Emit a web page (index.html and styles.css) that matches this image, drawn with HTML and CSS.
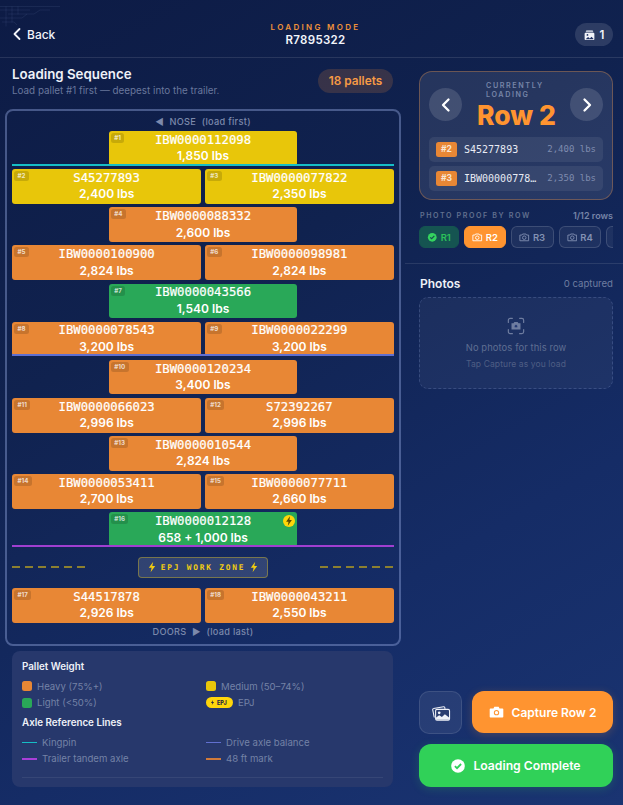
FILE: index.html
```html
<!DOCTYPE html>
<html lang="en">
<head>
<meta charset="utf-8">
<title>Loading Mode</title>
<link rel="stylesheet" href="styles.css">
</head>
<body>
<div class="app">
  <svg class="corner-art" viewBox="0 0 60 30" aria-hidden="true"><path d="M0 6.500h60M0 10h30M8 14h26l6-4h10M0 18h22l5-4M2 22h12l3 3M6 6.500v20M12 6.500v16M18 6.500v8"/></svg>
  <header class="topbar">
    <div class="back">
      <svg class="back-ico" viewBox="0 0 10 14"><path d="M7.500 2 2.500 7l5 5"/></svg>
      <span>Back</span>
    </div>
    <div class="mode">
      <div class="mode-label">LOADING MODE</div>
      <div class="mode-id">R7895322</div>
    </div>
    <div class="count-pill">
      <svg class="count-ico" viewBox="0 0 14 14"><path d="M3 .8h8l1 2.600H2z" fill="#e8ecf6" opacity=".75"/><rect x=".8" y="4" width="12.400" height="9.500" rx="1.500" fill="#f2f4fa"/><circle cx="4.400" cy="6.900" r="1.100" fill="#1c2f63"/><path d="M2 12.500l3.200-3 2.200 1.800 2.200-2 2.400 2.400v.8z" fill="#1c2f63"/></svg>
      <span>1</span>
    </div>
  </header>

  <div class="columns">
    <main class="left">
      <div class="seq-head">
        <div>
          <h1 class="seq-title">Loading Sequence</h1>
          <p class="seq-sub">Load pallet #1 first — deepest into the trailer.</p>
        </div>
        <div class="seq-pill">18 pallets</div>
      </div>

      <section class="trailer">
        <div class="end-label end-top">◀&nbsp; NOSE&nbsp; (load first)</div>
        <div class="rows">
          <div class="row single"><div class="pallet yellow"><span class="tag">#1</span><span class="pid">IBW0000112098</span><span class="wt">1,850 lbs</span></div><i class="axle cyan"></i></div>
          <div class="row"><div class="pallet yellow"><span class="tag">#2</span><span class="pid">S45277893</span><span class="wt">2,400 lbs</span></div><div class="pallet yellow"><span class="tag">#3</span><span class="pid">IBW0000077822</span><span class="wt">2,350 lbs</span></div></div>
          <div class="row single"><div class="pallet orange"><span class="tag">#4</span><span class="pid">IBW0000088332</span><span class="wt">2,600 lbs</span></div></div>
          <div class="row"><div class="pallet orange"><span class="tag">#5</span><span class="pid">IBW0000100900</span><span class="wt">2,824 lbs</span></div><div class="pallet orange"><span class="tag">#6</span><span class="pid">IBW0000098981</span><span class="wt">2,824 lbs</span></div></div>
          <div class="row single"><div class="pallet green"><span class="tag">#7</span><span class="pid">IBW0000043566</span><span class="wt">1,540 lbs</span></div></div>
          <div class="row"><div class="pallet orange"><span class="tag">#8</span><span class="pid">IBW0000078543</span><span class="wt">3,200 lbs</span></div><div class="pallet orange"><span class="tag">#9</span><span class="pid">IBW0000022299</span><span class="wt">3,200 lbs</span></div><i class="axle blue"></i></div>
          <div class="row single"><div class="pallet orange"><span class="tag">#10</span><span class="pid">IBW0000120234</span><span class="wt">3,400 lbs</span></div></div>
          <div class="row"><div class="pallet orange"><span class="tag">#11</span><span class="pid">IBW0000066023</span><span class="wt">2,996 lbs</span></div><div class="pallet orange"><span class="tag">#12</span><span class="pid">S72392267</span><span class="wt">2,996 lbs</span></div></div>
          <div class="row single"><div class="pallet orange"><span class="tag">#13</span><span class="pid">IBW0000010544</span><span class="wt">2,824 lbs</span></div></div>
          <div class="row"><div class="pallet orange"><span class="tag">#14</span><span class="pid">IBW0000053411</span><span class="wt">2,700 lbs</span></div><div class="pallet orange"><span class="tag">#15</span><span class="pid">IBW0000077711</span><span class="wt">2,660 lbs</span></div></div>
          <div class="row single"><div class="pallet green"><span class="tag">#16</span><span class="pid">IBW0000012128</span><span class="wt">658 + 1,000 lbs</span><span class="bolt-badge"><svg viewBox="0 0 10 10"><path d="M5.800 1 2.600 5.600h2L4 9l3.400-4.800h-2z"/></svg></span></div><i class="axle purple"></i></div>
        </div>
        <div class="zone">
          <span class="dash"></span>
          <div class="zone-label">
            <svg class="zone-bolt" viewBox="0 0 10 12"><path d="M6.200.8 1.800 6.800h2.800L3.600 11.200 8.200 5H5.300z"/></svg>
            <span>EPJ WORK ZONE</span>
            <svg class="zone-bolt" viewBox="0 0 10 12"><path d="M6.200.8 1.800 6.800h2.800L3.600 11.200 8.200 5H5.300z"/></svg>
          </div>
          <span class="dash"></span>
        </div>
        <div class="row"><div class="pallet orange"><span class="tag">#17</span><span class="pid">S44517878</span><span class="wt">2,926 lbs</span></div><div class="pallet orange"><span class="tag">#18</span><span class="pid">IBW0000043211</span><span class="wt">2,550 lbs</span></div></div>
        <div class="end-label end-bottom">DOORS&nbsp; ▶&nbsp; (load last)</div>
      </section>

      <section class="legend">
        <h2 class="legend-title">Pallet Weight</h2>
        <div class="legend-grid">
          <div class="lg-item"><i class="swatch s-orange"></i>Heavy (75%+)</div>
          <div class="lg-item"><i class="swatch s-yellow"></i>Medium (50–74%)</div>
          <div class="lg-item"><i class="swatch s-green"></i>Light (&lt;50%)</div>
          <div class="lg-item"><span class="epj-chip"><svg viewBox="0 0 10 12"><path d="M6.200.8 1.800 6.800h2.800L3.600 11.200 8.200 5H5.300z"/></svg>EPJ</span>EPJ</div>
        </div>
        <h2 class="legend-title axle-title">Axle Reference Lines</h2>
        <div class="legend-grid">
          <div class="lg-item"><i class="ln l-cyan"></i>Kingpin</div>
          <div class="lg-item"><i class="ln l-blue"></i>Drive axle balance</div>
          <div class="lg-item"><i class="ln l-purple"></i>Trailer tandem axle</div>
          <div class="lg-item"><i class="ln l-orange"></i>48 ft mark</div>
        </div>
        <div class="legend-rule"></div>
      </section>
    </main>

    <aside class="right">
      <div class="right-top">
        <section class="current">
          <div class="current-head">
            <div class="nav-btn"><svg viewBox="0 0 14 16"><path d="M9.500 2.500 4 8l5.500 5.500"/></svg></div>
            <div class="current-mid">
              <div class="current-label">CURRENTLY LOADING</div>
              <div class="current-row">Row 2</div>
            </div>
            <div class="nav-btn"><svg viewBox="0 0 14 16"><path d="M4.500 2.500 10 8l-5.500 5.500"/></svg></div>
          </div>
          <div class="cur-item"><span class="cur-tag">#2</span><span class="cur-id">S45277893</span><span class="cur-wt">2,400 lbs</span></div>
          <div class="cur-item"><span class="cur-tag">#3</span><span class="cur-id">IBW00000778…</span><span class="cur-wt">2,350 lbs</span></div>
        </section>

        <div class="proof-head">
          <span class="proof-label">PHOTO PROOF BY ROW</span>
          <span class="proof-count">1/12 rows</span>
        </div>
        <div class="chips">
          <div class="chip chip-done"><svg class="chip-ico" viewBox="0 0 12 12"><circle cx="6" cy="6" r="5" fill="#34d45f"/><path d="M3.600 6.100 5.300 7.700 8.400 4.500" fill="none" stroke="#15504f" stroke-width="1.400"/></svg>R1</div>
          <div class="chip chip-active"><svg class="chip-ico cam" viewBox="0 0 12 12"><path d="M1 3.500h2.300l.8-1.200h3.800l.8 1.200H11v6.500H1z"/><circle cx="6" cy="6.500" r="2"/></svg>R2</div>
          <div class="chip"><svg class="chip-ico cam" viewBox="0 0 12 12"><path d="M1 3.500h2.300l.8-1.200h3.800l.8 1.200H11v6.500H1z"/><circle cx="6" cy="6.500" r="2"/></svg>R3</div>
          <div class="chip"><svg class="chip-ico cam" viewBox="0 0 12 12"><path d="M1 3.500h2.300l.8-1.200h3.800l.8 1.200H11v6.500H1z"/><circle cx="6" cy="6.500" r="2"/></svg>R4</div>
          <div class="chip"><svg class="chip-ico cam" viewBox="0 0 12 12"><path d="M1 3.500h2.300l.8-1.200h3.800l.8 1.200H11v6.500H1z"/><circle cx="6" cy="6.500" r="2"/></svg>R5</div>
        </div>
      </div>

      <section class="photos">
        <div class="photos-head"><span class="photos-title">Photos</span><span class="photos-count">0 captured</span></div>
        <div class="dropzone">
          <svg class="drop-ico" viewBox="0 0 20 20"><path class="corner" d="M1.500 6V3.500a2 2 0 0 1 2-2H6M14 1.500h2.500a2 2 0 0 1 2 2V6M18.500 14v2.500a2 2 0 0 1-2 2H14M6 18.500H3.500a2 2 0 0 1-2-2V14"/><path class="body" d="M5 7h2.200l1-1.500h3.600l1 1.500H15v7H5z"/><circle class="lens" cx="10" cy="10.200" r="1.900"/></svg>
          <div class="drop-main">No photos for this row</div>
          <div class="drop-sub">Tap Capture as you load</div>
        </div>
      </section>

      <div class="actions">
        <div class="action-row">
          <div class="gallery-btn"><svg viewBox="0 0 22 20"><path class="g-back" d="M3.500 15 1.800 6.500a1.200 1.200 0 0 1 1-1.400l11-2.100a1.200 1.200 0 0 1 1.400 1l.3 1.500"/><rect class="g-front" x="5" y="6" width="15.500" height="12" rx="1.500"/><circle class="g-dot" cx="9" cy="9.800" r="1.500"/><path class="g-hill" d="M5.500 17.500v-2.500l3.500-2.500 3 2 3.300-3.200 4.700 3.700v2.500z"/></svg></div>
          <div class="capture-btn"><svg viewBox="0 0 18 15"><path d="M1.500 3h3.700l1.100-2h5.400l1.100 2h3.700a1 1 0 0 1 1 1v9.500a1 1 0 0 1-1 1h-15a1 1 0 0 1-1-1V4a1 1 0 0 1 1-1z"/><circle cx="9" cy="8.300" r="3.300" fill="#ff9430"/><circle cx="9" cy="8.300" r="2" fill="#fff"/></svg><span>Capture Row 2</span></div>
        </div>
        <div class="complete-btn"><svg viewBox="0 0 14 14"><circle cx="7" cy="7" r="6.800" fill="#fff"/><path d="M3.900 7.200 6 9.200 10.100 5" fill="none" stroke="#30d158" stroke-width="1.800"/></svg><span>Loading Complete</span></div>
      </div>
    </aside>
  </div>
</div>
</body>
</html>
```

FILE: styles.css
```css
* { box-sizing: border-box; }
html, body { margin: 0; padding: 0; }
body {
  width: 623px;
  height: 805px;
  overflow: hidden;
  font-family: Inter, "Liberation Sans", sans-serif;
  background: linear-gradient(150deg, #0d1b45 0%, #10224f 35%, #152c66 70%, #1a3472 100%);
  color: #f2f4fa;
}
h1, h2, p { margin: 0; }
.app { position: relative; display: flex; flex-direction: column; height: 805px; }
.corner-art { position: absolute; left: 0; top: 0; width: 60px; height: 30px; fill: none; stroke: rgba(150,170,220,.1); stroke-width: 1; }

/* top bar */
.topbar {
  height: 58px;
  flex: none;
  padding: 22px 10px 0 12px;
  display: grid;
  grid-template-columns: 1fr auto 1fr;
  align-items: start;
  border-bottom: 1px solid rgba(255,255,255,.11);
}
.back { display: flex; align-items: center; gap: 5px; font-size: 12px; font-weight: 500; height: 24px; }
.back-ico { width: 10px; height: 14px; fill: none; stroke: #f2f4fa; stroke-width: 1.800; stroke-linecap: round; stroke-linejoin: round; }
.mode { text-align: center; padding-left: 6px; }
.mode-label { font-size: 8px; font-weight: 600; letter-spacing: 2.300px; color: #f0923a; line-height: 10px; }
.mode-id { font-size: 11.500px; font-weight: 600; line-height: 17px; letter-spacing: .300px; }
.count-pill {
  justify-self: end;
  width: 38px; height: 23px;
  border-radius: 12px;
  background: rgba(255,255,255,.12);
  display: flex; align-items: center; justify-content: center; gap: 5px;
  font-size: 11.500px; font-weight: 600;
  margin-top: 1px;
}
.count-ico { width: 11px; height: 12px; }

.columns { flex: 1; display: flex; min-height: 0; }

/* left */
.left { width: 405px; flex: none; display: flex; flex-direction: column; padding: 8px 5px 0; }
.seq-head { display: flex; justify-content: space-between; align-items: flex-start; padding: 0 7px; height: 43px; }
.seq-title { font-size: 13.300px; font-weight: 600; line-height: 16px; color: #eef1f8; }
.seq-sub { font-size: 9.850px; color: #69779c; line-height: 13px; margin-top: 2px; }
.seq-pill {
  width: 75px; height: 24px; margin-top: 3px;
  border-radius: 12px;
  background: rgba(255,150,60,.17);
  color: #f79a45;
  font-size: 11.800px; font-weight: 600;
  display: flex; align-items: center; justify-content: center;
}
.trailer {
  width: 396px;
  height: 537px;
  border: 2px solid rgba(140,160,215,.45);
  border-radius: 8px;
  padding: 0 5px;
  display: flex; flex-direction: column;
}
.end-label { text-align: center; font-size: 9.200px; font-weight: 500; color: #7c89ab; letter-spacing: .300px; }
.end-top { height: 20px; line-height: 21px; }
.end-bottom { height: 20px; line-height: 18px; }
.rows { display: flex; flex-direction: column; gap: 3.500px; }
.row { position: relative; display: grid; grid-template-columns: 1fr 1fr; gap: 3.500px; height: 34.630px; flex: none; }
.row.single { grid-template-columns: 188.500px; justify-content: center; }
.pallet {
  position: relative;
  border-radius: 3px;
  display: flex; flex-direction: column; align-items: center; justify-content: center;
  color: #fff;
}
.yellow { background: #e8c60a; }
.orange { background: #e88735; }
.green { background: #29a858; }
.pid { font-family: "DejaVu Sans Mono", "Liberation Mono", monospace; font-size: 12.300px; line-height: 15.500px; -webkit-text-stroke: .2px #fff; }
.wt { font-size: 12px; font-weight: 600; line-height: 15.500px; }
.tag {
  position: absolute; left: 2px; top: 2px;
  font-size: 6.200px; font-weight: 700; line-height: 10px;
  padding: 0 3.500px; border-radius: 2.500px;
  background: rgba(0,0,0,.14);
  color: rgba(255,255,255,.75);
}
.bolt-badge { position: absolute; right: 2px; top: 3px; width: 12px; height: 12px; border-radius: 50%; background: #ffd60a; display: flex; }
.bolt-badge svg { width: 12px; height: 12px; fill: #5a4a00; }
.axle { position: absolute; left: 0; right: 0; bottom: 0; height: 2px; }
.cyan { background: #16bdc6; }
.blue { background: #5f6fd0; }
.purple { background: #a03fd0; }

.zone { height: 41px; flex: none; display: flex; align-items: center; justify-content: space-between; }
.dash { width: 74px; height: 2px; background: repeating-linear-gradient(90deg, #8c8030 0 8px, transparent 8px 13px); }
.zone-label {
  width: 130px; height: 21px;
  border: 1px solid rgba(255,214,10,.35);
  border-radius: 4px;
  background: rgba(255,255,255,.13);
  display: flex; align-items: center; justify-content: center; gap: 4px;
  font-family: "DejaVu Sans Mono", monospace;
  font-size: 7.800px; font-weight: 700; letter-spacing: 1.800px; color: #f2cc10;
  white-space: nowrap;
}
.zone-bolt { width: 10px; height: 12px; fill: #f2cc10; flex: none; }

/* legend */
.legend {
  width: 381px; height: 136px;
  margin: 5px 0 0 7px;
  padding: 9px 10px 0;
  border-radius: 8px;
  background: #27386c;
  position: relative;
}
.legend-title { font-size: 9.800px; font-weight: 600; line-height: 13px; color: #eef1f8; }
.axle-title { margin-top: 5px; }
.legend-grid { display: grid; grid-template-columns: 184px 1fr; grid-auto-rows: 16.500px; margin-top: 5px; }
.axle-title + .legend-grid { margin-top: 5px; }
.lg-item { display: flex; align-items: center; gap: 5px; font-size: 9.600px; color: #7482a6; }
.swatch { width: 10px; height: 10px; border-radius: 2.500px; flex: none; }
.s-orange { background: #e88735; }
.s-yellow { background: #e8c60a; }
.s-green { background: #29a858; }
.epj-chip {
  display: inline-flex; align-items: center; gap: 2px;
  width: 27px; height: 11px; padding-left: 4px;
  border-radius: 6px;
  background: #ffd60a; color: #2a2a40;
  font-size: 5.500px; font-weight: 800;
}
.epj-chip svg { width: 5px; height: 7px; fill: #2a2a40; }
.ln { width: 15px; height: 1.500px; flex: none; }
.l-cyan { background: #16bdc6; }
.l-blue { background: #6170d0; }
.l-purple { background: #a83fd8; }
.l-orange { background: #d07a3a; }
.legend-rule { position: absolute; left: 10px; right: 10px; top: 126px; height: 1px; background: rgba(255,255,255,.07); }

/* right */
.right { flex: 1; min-width: 0; display: flex; flex-direction: column; }
.right-top { padding: 13px 10px 13px 14px; border-bottom: 1px solid rgba(255,255,255,.1); height: 206px; flex: none; }
.current {
  width: 194px; height: 129px;
  border: 1px solid rgba(240,150,70,.35);
  border-radius: 13px;
  background: rgba(255,255,255,.095);
  padding: 17px 9px 0;
}
.current-head { display: flex; justify-content: space-between; align-items: flex-start; height: 49px; margin-top: -1px; }
.nav-btn { width: 33px; height: 33px; border-radius: 50%; background: rgba(255,255,255,.13); display: flex; align-items: center; justify-content: center; }
.nav-btn svg { width: 14px; height: 16px; fill: none; stroke: #fff; stroke-width: 2.300; stroke-linecap: round; stroke-linejoin: round; }
.current-mid { width: 100px; padding-left: 20px; margin-top: -7px; }
.current-label { font-size: 7.200px; font-weight: 600; letter-spacing: 1.600px; line-height: 9px; color: #7785a8; width: 70px; }
.current-row { font-size: 26.500px; font-weight: 800; line-height: 28px; margin-top: 2px; color: #ff9430; white-space: nowrap; margin-left: -9px; }
.cur-item {
  height: 24.500px; margin-bottom: 4.500px; padding: 0 7px;
  border-radius: 5px;
  background: rgba(255,255,255,.07);
  display: flex; align-items: center;
}
.cur-tag { width: 21px; height: 15px; border-radius: 2.500px; background: #e88735; color: #f9e6d4; font-size: 8.500px; font-weight: 700; display: flex; align-items: center; justify-content: center; flex: none; }
.cur-id { font-family: "DejaVu Sans Mono", monospace; font-size: 10px; color: #e8ebf4; margin-left: 7px; flex: 1; white-space: nowrap; }
.cur-wt { font-family: "DejaVu Sans Mono", monospace; font-size: 9px; color: #7f8cae; white-space: nowrap; }
.proof-head { width: 194px; display: flex; justify-content: space-between; align-items: center; margin-top: 9px; height: 12px; }
.proof-label { font-size: 7.100px; font-weight: 600; letter-spacing: 1.620px; color: #61708f; padding-left: 1px; }
.proof-count { font-size: 9px; font-weight: 600; color: #7785a8; }
.chips { display: flex; gap: 5px; width: 194px; overflow: hidden; margin-top: 5px; }
.chip {
  width: 42.500px; height: 22px; flex: none;
  border: 1px solid rgba(255,255,255,.14);
  border-radius: 6px;
  background: rgba(255,255,255,.05);
  display: flex; align-items: center; justify-content: center; gap: 3px;
  font-size: 9.500px; font-weight: 600; color: #8391b3;
}
.chip-ico { width: 10.500px; height: 10.500px; flex: none; }
.cam { fill: none; stroke: currentColor; stroke-width: 1; stroke-linejoin: round; }
.chip-done { width: 40px; background: #155451; border-color: #155451; color: #2cc05a; }
.chip-active { background: #ff9430; border-color: #ff9430; color: #fff; width: 42px; }

.photos { padding: 11px 10px 0 14px; }
.photos-head { display: flex; justify-content: space-between; align-items: center; width: 194px; height: 16px; }
.photos-title { font-size: 12px; font-weight: 600; color: #eef1f8; padding-left: 1px; }
.photos-count { font-size: 9.600px; color: #6f7da0; }
.dropzone {
  width: 194px; height: 92px; margin-top: 6px;
  border: 1px dashed rgba(140,160,215,.25);
  border-radius: 9px;
  background: rgba(255,255,255,.045);
  display: flex; flex-direction: column; align-items: center;
  padding-top: 19px;
}
.drop-ico { width: 18px; height: 18px; }
.corner { fill: none; stroke: #6f7da0; stroke-width: 1.300; stroke-linecap: round; }
.body { fill: #6f7da0; }
.lens { fill: #253a75; stroke: #6f7da0; stroke-width: .8; }
.drop-main { font-size: 9.400px; color: #5f6e92; line-height: 12px; margin-top: 7px; letter-spacing: .1px; }
.drop-sub { font-size: 8.500px; color: #4f5e84; line-height: 11px; margin-top: 5px; letter-spacing: .1px; }

.actions { margin-top: auto; padding: 0 10px 18px 14px; display: flex; flex-direction: column; gap: 10px; }
.action-row { display: flex; gap: 10px; }
.gallery-btn {
  width: 43px; height: 43px; flex: none;
  border: 1px solid rgba(255,255,255,.1);
  border-radius: 10px;
  background: rgba(255,255,255,.07);
  display: flex; align-items: center; justify-content: center;
}
.gallery-btn svg { width: 20px; height: 18px; }
.g-back { fill: none; stroke: #eef1f8; stroke-width: 1.200; }
.g-front { fill: #2a3d70; stroke: #eef1f8; stroke-width: 1.200; }
.g-dot { fill: #eef1f8; }
.g-hill { fill: #eef1f8; }
.capture-btn {
  width: 141px; height: 42px;
  border-radius: 12px;
  background: #ff9430;
  box-shadow: 0 2px 10px rgba(255,148,48,.22);
  display: flex; align-items: center; justify-content: center; gap: 8px;
  font-size: 12px; font-weight: 600; color: #fff;
}
.capture-btn svg { width: 15px; height: 12px; fill: #fff; }
.complete-btn {
  width: 194px; height: 43px;
  border-radius: 12px;
  background: #30d158;
  box-shadow: 0 2px 10px rgba(48,209,88,.2);
  display: flex; align-items: center; justify-content: center; gap: 8px;
  font-size: 12.200px; font-weight: 600; color: #fff;
}
.complete-btn svg { width: 14px; height: 14px; }
```
